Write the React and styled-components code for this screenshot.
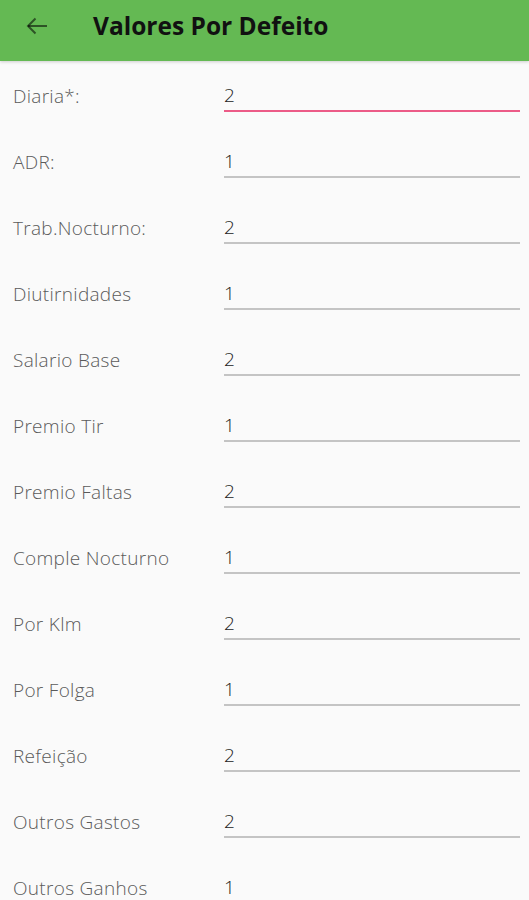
import React from 'react';
import styled, { createGlobalStyle } from 'styled-components';

const GlobalStyle = createGlobalStyle`
    body {
        margin: 0;
        background: #fafafa;
        font-family: "Open Sans", "Noto Sans", sans-serif;
    }
`

//styling
const Page = styled.div`
    width: 529px;
    height: 900px;
    overflow: hidden;
    background: #fafafa;
`

const Toolbar = styled.header`
    height: 61px;
    box-sizing: border-box;
    padding: 0 0 10px 24px;
    background: #64b953;
    display: flex;
    align-items: center;
    box-shadow: 0 1px 3px rgba(0, 0, 0, 0.18);
    position: relative;
    z-index: 1;
`

const BackButton = styled.button`
    border: none;
    background: none;
    padding: 0;
    width: 26px;
    height: 26px;
    display: flex;
    align-items: center;
    justify-content: center;
    margin-right: 43px;
    color: rgba(0, 0, 0, 0.55);
`

const Title = styled.h1`
    margin: 0;
    font-size: 24.5px;
    font-weight: 700;
    color: #111;
`

const Form = styled.div`
    padding-top: 3px;
`

const Row = styled.div`
    display: flex;
    align-items: center;
    height: 66px;
    padding: 0 9px 0 13px;
`

const Label = styled.div`
    width: 211px;
    font-size: 19px;
    font-weight: 300;
    letter-spacing: 0.3px;
    color: #5a5a5a;
    margin-top: -3px;
`

const Field = styled.div`
    flex: 1;
    font-size: 19px;
    font-weight: 300;
    color: #222;
    line-height: 24px;
    padding-bottom: 3px;
    border-bottom: 2px solid ${pr => pr.focused ? '#ec5b87' : '#c4c4c4'};
`

const fields = [
    ['Diaria*:', '2'],
    ['ADR:', '1'],
    ['Trab.Nocturno:', '2'],
    ['Diutirnidades', '1'],
    ['Salario Base', '2'],
    ['Premio Tir', '1'],
    ['Premio Faltas', '2'],
    ['Comple Nocturno', '1'],
    ['Por Klm', '2'],
    ['Por Folga', '1'],
    ['Refeição', '2'],
    ['Outros Gastos', '2'],
    ['Outros Ganhos', '1'],
];


//********************************************* */
function App() {
    return (
        <Page>
            <GlobalStyle />
            <Toolbar>
                <BackButton>
                    <svg width="22" height="18" viewBox="0 0 22 18" fill="none" stroke="currentColor" strokeWidth="2">
                        <path d="M21 9H2" />
                        <path d="M9.5 1.5L2 9l7.5 7.5" />
                    </svg>
                </BackButton>
                <Title>Valores Por Defeito</Title>
            </Toolbar>
            <Form>
                {fields.map(([label, value], i) => (
                    <Row key={label}>
                        <Label>{label}</Label>
                        <Field focused={i === 0}>{value}</Field>
                    </Row>
                ))}
            </Form>
        </Page>
    )
}

export default App;
